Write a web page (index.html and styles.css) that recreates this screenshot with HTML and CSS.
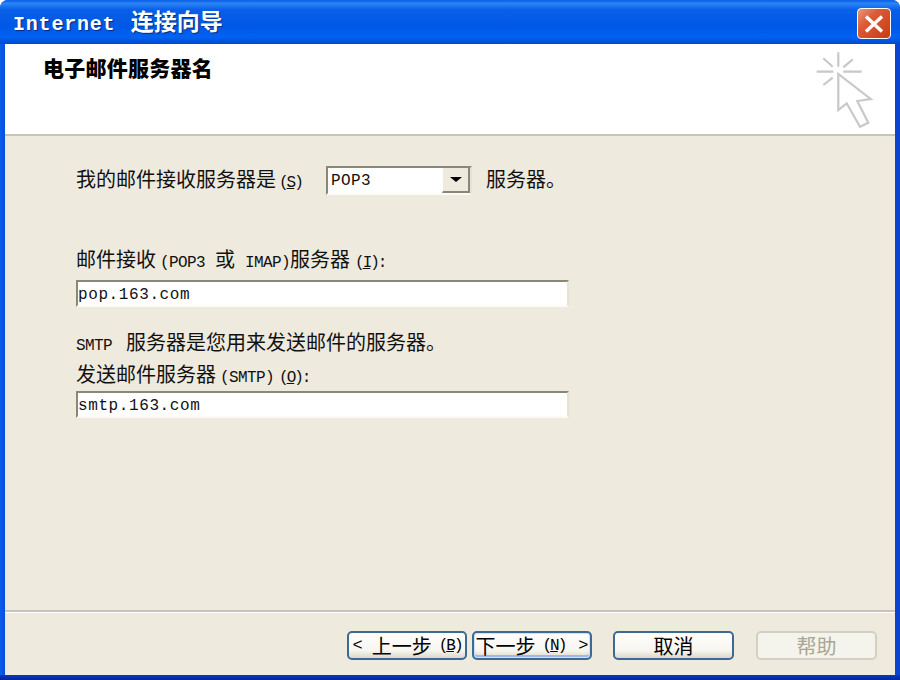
FILE: index.html
```html
<!DOCTYPE html>
<html lang="zh-CN">
<head>
    <meta charset="UTF-8">
    <title>Internet 连接向导</title>
    <link rel="stylesheet" href="styles.css">
</head>
<body>
    <div class="window">
        <div class="titlebar">
            <div class="title"><span class="title-latin">Internet</span> 连接向导</div>
            <div class="close-btn">
                <svg width="22" height="20" viewBox="0 0 22 20">
                    <path d="M3 2.5 L19 17.5 M19 2.5 L3 17.5" stroke="#fff" stroke-width="3.4" fill="none"/>
                </svg>
            </div>
        </div>
        <div class="client">
            <div class="header">
                <h1>电子邮件服务器名</h1>
                <svg class="wizard-icon" width="60" height="80" viewBox="0 0 60 80">
                    <g stroke="#c8c8c8" stroke-width="2.2" fill="none">
                        <path d="M23.3 2.3 V16.7 M1.7 21.7 H18.3 M28.3 21.7 H46.7 M8.3 8.3 L17.7 16.7 M37.7 9.3 L28.3 17.3 M8.3 35 L17.7 27.7"/>
                        <path d="M23.3 24 V60 L31.7 53.3 L45 76.7 L53.3 72.7 L42.3 51 L55.7 49 Z" fill="#fff"/>
                    </g>
                </svg>
            </div>
            <div class="form">
                <div class="row-server">
                    <label class="server-label">我的邮件接收服务器是<span class="lat hotkey">(<u>S</u>)</span></label>
                    <div class="combo">
                        <span class="combo-value lat">POP3</span>
                        <span class="combo-arrow"><i></i></span>
                    </div>
                    <span class="suffix">服务器。</span>
                </div>
                <label class="field-label first">邮件接收<span class="lat key">(POP3</span><span class="or">或</span><span class="lat">IMAP)</span>服务器<span class="lat hotkey">(<u>I</u>):</span></label>
                <div class="text-input lat">pop.163.com</div>
                <p class="note"><span class="lat note-lat">SMTP</span>服务器是您用来发送邮件的服务器。</p>
                <label class="field-label second">发送邮件服务器<span class="lat key">(SMTP)</span><span class="lat hotkey">(<u>O</u>):</span></label>
                <div class="text-input lat">smtp.163.com</div>
            </div>
            <div class="footer">
                <div class="btn btn-back"><span class="lat chevron">&lt;</span><span>上一步</span><span class="lat btn-key">(<u>B</u>)</span></div>
                <div class="btn btn-next"><span>下一步</span><span class="lat btn-key">(<u>N</u>)</span><span class="lat chevron next-chevron">&gt;</span></div>
                <div class="btn btn-cancel">取消</div>
                <div class="btn btn-help">帮助</div>
            </div>
        </div>
    </div>
</body>
</html>
```

FILE: styles.css
```css
html, body {
    margin: 0;
    height: 100%;
    background-color: #fff;
    overflow: hidden;
}
body {
    font-family: "Noto Sans CJK SC", "Liberation Sans", sans-serif;
    font-size: 20px;
    color: #111;
}
.lat {
    font-family: "Liberation Mono", "Noto Sans CJK SC", monospace;
    font-size: 16px;
    letter-spacing: -0.6px;
}
.key {
    margin-left: 4px;
}
.hotkey {
    margin-left: 3px;
    letter-spacing: -2px;
}
.window {
    width: 900px;
    height: 680px;
    display: flex;
    flex-direction: column;
    background: linear-gradient(to top, #04259f 0, #0a3ac0 5px, transparent 5px), linear-gradient(to right, #0a5cf0 0, #0a50e0 4px, #0a44d0 100%);
    border-radius: 8px 8px 0 0;
    overflow: hidden;
}
.titlebar {
    height: 44px;
    flex: none;
    display: flex;
    justify-content: space-between;
    align-items: center;
    padding: 0 9px 0 13px;
    background: linear-gradient(to bottom, #0a5ee8 0%, #2a85f5 8%, #0a5fe8 22%, #0058e6 60%, #0062f2 85%, #0048c8 100%);
}
.title {
    color: #fff;
    font-size: 23px;
    font-weight: bold;
    line-height: 1;
    margin-top: -1px;
    text-shadow: 1px 1px 1px #0a2a80;
}
.title-latin {
    font-family: "Liberation Mono", monospace;
    font-size: 20px;
    letter-spacing: 0.8px;
    margin-right: 10px;
}
.close-btn {
    width: 32px;
    height: 29px;
    display: flex;
    align-items: center;
    justify-content: center;
    margin-top: 3px;
    border: 1px solid #fff;
    border-radius: 4px;
    background: linear-gradient(135deg, #e89a80 0%, #dc5a35 35%, #c83c14 100%);
}
.client {
    flex: 1;
    display: flex;
    flex-direction: column;
    margin: 0 5px 5px;
    background-color: #eeeade;
    box-shadow: inset 1px 0 0 #dfe6f5;
}
.header {
    height: 90px;
    flex: none;
    display: flex;
    justify-content: space-between;
    background-color: #fff;
    border-bottom: 2px solid #c9c5b6;
}
.header h1 {
    margin: 9px 0 0 38px;
    font-size: 21px;
    font-weight: 900;
    letter-spacing: 0.25px;
    line-height: 28px;
    color: #000;
}
.wizard-icon {
    margin: 6px 20px 0 0;
}
.form {
    flex: 1;
    padding-left: 71px;
}
.row-server {
    display: flex;
    align-items: center;
    margin-top: 29px;
    height: 30px;
}
.server-label, .suffix {
    margin-bottom: 4px;
}
.server-label {
    width: 250px;
}
.combo {
    width: 146px;
    height: 29px;
    box-sizing: border-box;
    display: flex;
    justify-content: space-between;
    background-color: #fff;
    border: 2px solid;
    border-color: #8b8778 #e6e3d4 #fbfaf5 #8b8778;
}
.combo-value {
    line-height: 27px;
    padding-left: 3px;
    letter-spacing: 0.4px;
}
.combo-arrow {
    width: 25px;
    display: flex;
    align-items: center;
    justify-content: center;
    background-color: #eeeade;
    border-left: 1px solid #fff;
    border-right: 2px solid #8b8778;
    border-bottom: 2px solid #8b8778;
}
.combo-arrow i {
    border-style: solid;
    border-width: 5px 6px 0;
    border-color: #000 transparent transparent;
}
.suffix {
    margin-left: 14px;
}
.field-label {
    display: block;
    height: 30px;
    line-height: 30px;
    white-space: nowrap;
}
.field-label.first {
    margin: 49px 0 6px;
}
.field-label.second {
    margin: 2px 0;
}
.field-label .hotkey {
    margin-left: 5px;
}
.or {
    margin: 0 10px;
}
.text-input {
    width: 493px;
    height: 27px;
    line-height: 26px;
    box-sizing: border-box;
    background-color: #fff;
    border: 2px solid;
    border-color: #8b8778 #e6e3d4 #fbfaf5 #8b8778;
    letter-spacing: 0.6px;
}
.note {
    margin: 20px 0 0;
    height: 30px;
    line-height: 30px;
}
.note-lat {
    margin-right: 14px;
}
.footer {
    height: 65px;
    flex: none;
    display: flex;
    align-items: flex-start;
    padding: 19px 0 0 342px;
    box-sizing: border-box;
    border-top: 2px solid #c9c5b6;
    box-shadow: inset 0 1px 0 #fff;
}
.btn {
    width: 120px;
    height: 29px;
    box-sizing: border-box;
    display: flex;
    align-items: center;
    justify-content: center;
    gap: 7px;
    line-height: 1;
    white-space: nowrap;
    border: 2px solid #3c6a94;
    border-radius: 5px;
    background: linear-gradient(to bottom, #fff 0%, #f6f5ef 70%, #dcd8c8 100%);
    color: #000;
}
.btn-key {
    letter-spacing: -2px;
}
.chevron {
    font-size: 17px;
    letter-spacing: 0;
}
.btn-next {
    margin-left: 5px;
    box-shadow: inset 0 0 0 1px #cfe0fa, inset 0 -2px 0 1px #9db8ea;
}
.next-chevron {
    margin-left: 6px;
}
.btn-back .chevron {
    margin-right: 2px;
}
.btn-cancel {
    width: 121px;
    margin-left: 21px;
}
.btn-help {
    width: 121px;
    margin-left: 22px;
    color: #a8a693;
    background: #f4f3ec;
    border-color: #d3d0c2;
}
```
